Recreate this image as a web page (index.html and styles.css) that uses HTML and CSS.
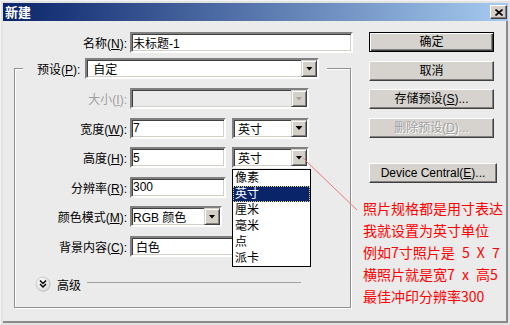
FILE: index.html
```html
<!DOCTYPE html>
<html>
<head>
<meta charset="utf-8">
<link rel="stylesheet" href="styles.css">
</head>
<body>
<div class="window">
  <div class="titlebar">
    <span class="title">新建</span>
    <span class="close"><svg width="8" height="7" viewBox="0 0 8 7"><path d="M0.5 0.5L7.5 6.5M7.5 0.5L0.5 6.5" stroke="#000" stroke-width="1.6"/></svg></span>
  </div>
  <div class="body">
    <div class="main">
      <div class="row name-row">
        <span class="lbl">名称(<u>N</u>):</span>
        <div class="field w-name">未标题-1</div>
      </div>
      <fieldset class="group">
        <legend class="preset">
          <div class="preset-inner">
            <span class="preset-lbl">预设(<u>P</u>):</span>
            <div class="field select w-preset pad6">自定<i class="arrow"></i></div>
          </div>
        </legend>
        <div class="rows">
          <div class="row">
            <span class="lbl disabled">大小(<u>I</u>):</span>
            <div class="field select w-wide is-disabled"><i class="arrow"></i></div>
          </div>
          <div class="row">
            <span class="lbl">宽度(<u>W</u>):</span>
            <div class="field w-num">7</div>
            <div class="field select w-unit">英寸<i class="arrow"></i></div>
          </div>
          <div class="row">
            <span class="lbl">高度(<u>H</u>):</span>
            <div class="field w-num">5</div>
            <div class="field select w-unit">英寸<i class="arrow"></i></div>
          </div>
          <div class="row">
            <span class="lbl">分辨率(<u>R</u>):</span>
            <div class="field w-num">300</div>
            <div class="field select w-unit"><i class="arrow"></i></div>
          </div>
          <div class="row">
            <span class="lbl">颜色模式(<u>M</u>):</span>
            <div class="field select w-mode pad1">RGB 颜色<i class="arrow"></i></div>
            <div class="field select w-unit gap10"><i class="arrow"></i></div>
          </div>
          <div class="row">
            <span class="lbl">背景内容(<u>C</u>):</span>
            <div class="field select w-wide">白色<i class="arrow"></i></div>
          </div>
          <div class="advanced">
            <svg class="adv-icon" width="16" height="16" viewBox="0 0 16 16">
              <defs>
                <radialGradient id="g" cx="0.4" cy="0.35" r="0.7">
                  <stop offset="0" stop-color="#ffffff"/>
                  <stop offset="1" stop-color="#d8d8d8"/>
                </radialGradient>
              </defs>
              <circle cx="8.5" cy="8.5" r="7" fill="#b8b8b8"/>
              <circle cx="8" cy="8" r="7" fill="url(#g)" stroke="#c4c4c4" stroke-width="0.8"/>
              <path d="M5 4.5L8 7.5L11 4.5M5 8L8 11L11 8" fill="none" stroke="#000" stroke-width="1.5"/>
            </svg>
            <span class="adv-text">高级</span>
            <span class="adv-line"></span>
          </div>
        </div>
      </fieldset>
    </div>
    <div class="btn-col">
      <div class="pbtn default">确定</div>
      <div class="pbtn">取消</div>
      <div class="pbtn">存储预设(<u>S</u>)...</div>
      <div class="pbtn disabled-btn">删除预设(<u>D</u>)...</div>
      <div class="pbtn wide-btn">Device Central(<u>E</u>)...</div>
    </div>
  </div>

  <ul class="dropdown">
    <li>像素</li>
    <li class="selected">英寸</li>
    <li>厘米</li>
    <li>毫米</li>
    <li>点</li>
    <li>派卡</li>
  </ul>

  <svg class="pointer" width="510" height="325" viewBox="0 0 510 325">
    <line x1="303" y1="158" x2="357" y2="210" stroke="#f07878" stroke-width="1"/>
  </svg>

  <div class="note">照片规格都是用寸表达
我就设置为英寸单位
例如7寸照片是 5 X 7
横照片就是宽7 x 高5
最佳冲印分辨率300</div>
</div>
</body>
</html>
```

FILE: styles.css
```css
html, body {
  margin: 0;
  padding: 0;
}

body {
  background: #d4d0c8;
  font-family: "Liberation Sans", "Noto Sans CJK SC", sans-serif;
  font-size: 12px;
  color: #000;
}

.window {
  position: relative;
  box-sizing: border-box;
  width: 510px;
  height: 325px;
  padding: 3px 2px 2px 3px;
  background: #e2e2e2;
  box-shadow: inset 1px 1px 0 #f4f4f4;
  overflow: hidden;
}

.titlebar {
  box-sizing: border-box;
  height: 18px;
  display: flex;
  align-items: center;
  justify-content: space-between;
  padding: 0 1px 0 2px;
  background: linear-gradient(to right, #0a246a, #a6caf0);
}

.title {
  color: #fff;
  font-weight: bold;
  font-size: 13px;
  line-height: 18px;
  font-family: "Noto Sans CJK SC", sans-serif;
}

.close {
  box-sizing: border-box;
  width: 17px;
  height: 14px;
  display: flex;
  align-items: center;
  justify-content: center;
  background: #d4d0c8;
  border: 1px solid;
  border-color: #fff #404040 #404040 #fff;
  box-shadow: inset -1px -1px 0 #808080;
}

.body {
  box-sizing: border-box;
  height: 302px;
  display: flex;
  align-items: flex-start;
  padding: 11px 0 0 11px;
  background: #ebebeb;
  border-right: 2px solid #8a8a8a;
  border-bottom: 2px solid #8a8a8a;
}

.main {
  width: 339px;
  flex: none;
}

.row {
  display: flex;
  align-items: center;
  height: 21px;
}

.lbl {
  width: 112px;
  margin-right: 3px;
  text-align: right;
  white-space: nowrap;
  flex: none;
}

.name-row .lbl {
  width: 113px;
}

.disabled {
  color: #a0a0a0;
}

.field {
  position: relative;
  box-sizing: border-box;
  height: 21px;
  flex: none;
  display: flex;
  align-items: center;
  padding-left: 1px;
  background: #fff;
  border: 2px solid;
  border-color: #808080 #fff #fff #808080;
  box-shadow: inset 1px 1px 0 #404040, inset -1px -1px 0 #d4d0c8;
  white-space: nowrap;
  overflow: hidden;
}

.select {
  padding-left: 4px;
}

.pad6 {
  padding-left: 6px;
}

.pad1 {
  padding-left: 1px;
}

.is-disabled {
  background: #ebebeb;
}

.arrow {
  position: absolute;
  right: 0;
  top: 0;
  box-sizing: border-box;
  width: 16px;
  height: 17px;
  display: flex;
  align-items: center;
  justify-content: center;
  background: #d4d0c8;
  border: 1px solid;
  border-color: #d4d0c8 #404040 #404040 #d4d0c8;
  box-shadow: inset 1px 1px 0 #fff, inset -1px -1px 0 #808080;
}

.arrow::after {
  content: "";
  width: 7px;
  height: 4px;
  background: #000;
  clip-path: polygon(0 0, 100% 0, 50% 100%);
}

.is-disabled .arrow::after {
  background: #a0a0a0;
}

.w-name { width: 223px; }
.w-preset { width: 234px; }
.w-wide { width: 179px; }
.w-num { width: 96px; }
.w-unit { width: 77px; margin-left: 6px; }
.w-mode { width: 92px; }
.gap10 { margin-left: 10px; }

.group {
  box-sizing: border-box;
  width: 337px;
  margin: 5px 0 0 0;
  padding: 0 0 15px 0;
  min-width: 0;
  border: 1px solid #919191;
  box-shadow: inset 1px 1px 0 #fff, 1px 1px 0 #fff;
}

.preset {
  margin-left: 8px;
  padding: 0 8px 0 14px;
  background: #ebebeb;
}

.preset-inner {
  display: flex;
  align-items: center;
  height: 21px;
}

.preset-lbl {
  margin-right: 5px;
  white-space: nowrap;
}

.rows {
  display: flex;
  flex-direction: column;
  gap: 8.5px;
  padding-top: 9px;
}

.advanced {
  display: flex;
  align-items: center;
  height: 16px;
  margin-top: 11px;
  padding-left: 20px;
}

.adv-icon {
  flex: none;
  display: block;
}

.adv-text {
  margin-left: 6px;
}

.adv-line {
  width: 214px;
  margin-left: 6px;
  height: 0;
  border-top: 1px solid #a0a0a0;
  margin-top: -3px;
}

.btn-col {
  display: flex;
  flex-direction: column;
  gap: 8.5px;
  margin-left: 16px;
  flex: none;
}

.pbtn {
  box-sizing: border-box;
  width: 125px;
  height: 20px;
  line-height: 18px;
  text-align: center;
  white-space: nowrap;
  background: #d6d3ce;
  border: 1px solid;
  border-color: #fff #404040 #404040 #fff;
  box-shadow: inset -1px -1px 0 #808080;
}

.pbtn.default {
  border-color: #000;
  box-shadow: inset 1px 1px 0 #fff, inset -1px -1px 0 #404040, inset -2px -2px 0 #808080;
}

.disabled-btn {
  color: #a0a0a0;
  text-shadow: 1px 1px 0 #fff;
}

.wide-btn {
  width: 128px;
  margin-top: 17px;
}

.dropdown {
  position: absolute;
  left: 232px;
  top: 169px;
  box-sizing: border-box;
  width: 79px;
  height: 98px;
  margin: 0;
  padding: 0;
  list-style: none;
  background: #fff;
  border: 1px solid #000;
}

.dropdown li {
  height: 16px;
  line-height: 16px;
  padding-left: 2px;
}

.dropdown li.selected {
  background: #0a246a;
  color: #fff;
  outline: 1px dotted #e8d080;
  outline-offset: -1px;
}

.pointer {
  position: absolute;
  left: 0;
  top: 0;
  pointer-events: none;
}

.note {
  position: absolute;
  left: 363px;
  top: 197px;
  color: #ff0000;
  font-family: "Noto Sans CJK SC", sans-serif;
  font-size: 14px;
  line-height: 22px;
  white-space: pre;
  word-spacing: 4px;
}
```
